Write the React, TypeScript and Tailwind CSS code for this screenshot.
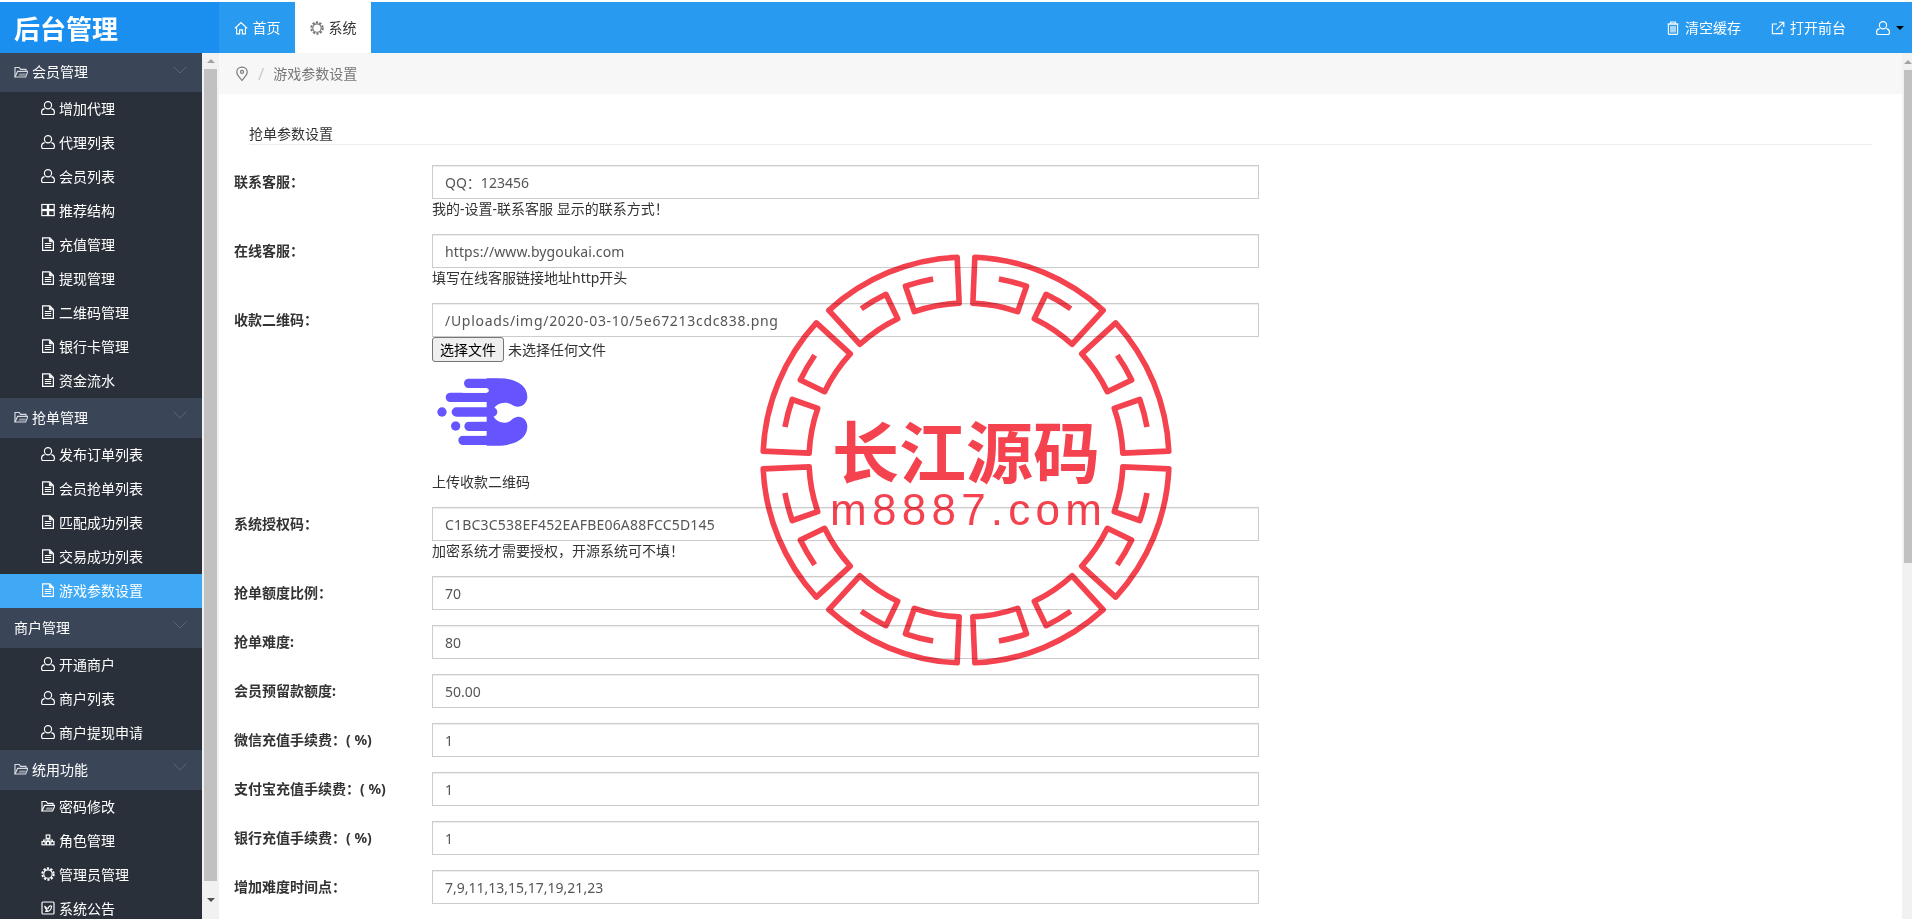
import React from "react";

const COLON = "\uFF1A";
const BANG = "\uFF01";
const COMMA = "\uFF0C";

const line = { fill: "none", stroke: "currentColor", strokeWidth: 1.15 } as const;

function Ico({ kind, className = "w-[14px] h-[14px]" }: { kind: string; className?: string }) {
  const c = (
    {
      user: (
        <>
          <circle cx="7" cy="4.2" r="3.6" {...line} />
          <path d="M3.6 7.6C1.8 7.9 0.6 9.2 0.6 11V12C0.6 13 1.2 13.6 2.2 13.6H11.8C12.8 13.6 13.4 13 13.4 12V11C13.4 9.2 12.2 7.9 10.4 7.6" {...line} />
        </>
      ),
      folder: (
        <>
          <path d="M1 12V2.5H5.2L6.6 4.4H12V6.2" {...line} />
          <path d="M1 12L3.6 6.4H14L11.6 12Z" {...line} />
          <path d="M4.5 10.8L5.6 8.6H12L11 10.8Z" fill="currentColor" opacity="0.55" />
        </>
      ),
      file: (
        <>
          <path d="M1.6 0.8H8.8L12.4 4.4V13.4H1.6Z" {...line} />
          <path d="M8.4 1V4.8H12.2" fill="currentColor" stroke="currentColor" strokeWidth="0.8" />
          <path d="M3.8 6.5H10.2M3.8 8.5H10.2M3.8 10.5H10.2" {...line} />
        </>
      ),
      grid: (
        <>
          <rect x="0.8" y="1.5" width="5.6" height="5" {...line} />
          <rect x="7.6" y="1.5" width="5.6" height="5" {...line} />
          <rect x="0.8" y="7.6" width="5.6" height="5" {...line} />
          <rect x="7.6" y="7.6" width="5.6" height="5" {...line} />
        </>
      ),
      sitemap: (
        <>
          <rect x="5.2" y="2" width="3.6" height="3.4" {...line} />
          <rect x="1" y="8.6" width="3.2" height="3.2" {...line} />
          <rect x="5.4" y="8.6" width="3.2" height="3.2" {...line} />
          <rect x="9.8" y="8.6" width="3.2" height="3.2" {...line} />
          <path d="M7 5.4V8.6M2.6 8.6V7H11.4V8.6" {...line} />
        </>
      ),
      gear: (
        <>
          <circle cx="7" cy="7" r="4.2" {...line} />
          <circle cx="7" cy="7" r="5.7" fill="none" stroke="currentColor" strokeWidth="2" strokeDasharray="2.2 1.38" />
        </>
      ),
      note: (
        <>
          <rect x="1" y="1" width="12" height="12" rx="1" {...line} />
          <path d="M3.6 5C5 7 6.4 7.4 7.4 7.2C7.4 5.4 9 4.4 10.6 5.2L10.2 7C10 9.2 7.6 11 4.2 10.2C5.4 10 6 9.6 6.4 9.2C5 8.6 4 7 3.6 5Z" {...line} />
        </>
      ),
      home: (
        <>
          <path d="M0.8 7.4L7 1.6L13.2 7.4" {...line} strokeWidth="1.3" />
          <path d="M2.6 6.6V12.8H5.6V8.8H8.4V12.8H11.4V6.6" {...line} />
        </>
      ),
      trash: (
        <>
          <path d="M1.4 3H12.6M4.6 3V1H9.4V3" {...line} />
          <rect x="2.4" y="3" width="9.2" height="10.4" rx="1" {...line} />
          <path d="M5 5V11.5M7 5V11.5M9 5V11.5" {...line} />
        </>
      ),
      ext: (
        <>
          <path d="M11 8V12.6H1.4V3H6" {...line} />
          <path d="M5.4 8.6L12.4 1.6M8 1.2H12.8V6" {...line} />
        </>
      ),
      pin: (
        <>
          <path d="M7 14L3 8.8C2.2 7.8 1.8 6.7 1.8 5.5C1.8 2.6 4.1 0.6 7 0.6C9.9 0.6 12.2 2.6 12.2 5.5C12.2 6.7 11.8 7.8 11 8.8Z" {...line} />
          <circle cx="7" cy="5.4" r="1.5" {...line} />
        </>
      ),
    } as Record<string, React.ReactNode>
  )[kind];
  return (
    <svg viewBox="0 0 14 14" className={`${className} shrink-0`}>
      {c}
    </svg>
  );
}

type Group = { title: string; folder: boolean; h: string; items: [string, string, boolean?][] };

const groups: Group[] = [
  {
    title: "会员管理",
    folder: true,
    h: "h-[39px]",
    items: [
      ["user", "增加代理"],
      ["user", "代理列表"],
      ["user", "会员列表"],
      ["grid", "推荐结构"],
      ["file", "充值管理"],
      ["file", "提现管理"],
      ["file", "二维码管理"],
      ["file", "银行卡管理"],
      ["file", "资金流水"],
    ],
  },
  {
    title: "抢单管理",
    folder: true,
    h: "h-[40px]",
    items: [
      ["user", "发布订单列表"],
      ["file", "会员抢单列表"],
      ["file", "匹配成功列表"],
      ["file", "交易成功列表"],
      ["file", "游戏参数设置", true],
    ],
  },
  {
    title: "商户管理",
    folder: false,
    h: "h-[40px]",
    items: [
      ["user", "开通商户"],
      ["user", "商户列表"],
      ["user", "商户提现申请"],
    ],
  },
  {
    title: "统用功能",
    folder: true,
    h: "h-[40px]",
    items: [
      ["folder", "密码修改"],
      ["sitemap", "角色管理"],
      ["gear", "管理员管理"],
      ["note", "系统公告"],
    ],
  },
];

function Field({ label, value, help, track = "" }: { label: string; value: string; help?: string; track?: string }) {
  return (
    <div className="flex mb-[15px]">
      <label className="w-[198px] shrink-0 h-[34px] leading-[34px] font-bold text-[#333]">{label}</label>
      <div className="w-[827px]">
        <input
          readOnly
          defaultValue={value}
          className={`block w-full h-[34px] px-[12px] border border-[#ccc] text-[14px] text-[#555] bg-white shadow-[inset_0_1px_1px_rgba(0,0,0,0.075)] outline-none ${track}`}
        />
        {help && <p className="h-[20px] leading-[20px] text-[#333]">{help}</p>}
      </div>
    </div>
  );
}

function Logo() {
  return (
    <svg viewBox="636 -24 300 330" className="block w-[100px] h-[110px]">
      <g fill="#6654ff">
        <path d="M800 25H840C890 25 922 48 922 80C922 98 908 110 893 110C878 110 872 98 855 98C834 98 818 112 818 128C818 144 834 158 855 158C872 158 878 140 895 140C910 140 922 152 922 170C922 205 885 227 830 227H800Z" />
        <circle cx="666" cy="126" r="14" />
        <circle cx="707" cy="168" r="14" />
      </g>
      <path
        d="M746 40H830M691 82H830M709 126H818M747 169H830M729 211H830"
        fill="none"
        stroke="#6654ff"
        strokeWidth="28"
        strokeLinecap="round"
      />
      <path d="M730 61.5H800M680 104.5H790M700 147.5H772M720 190H790" fill="none" stroke="#fff" strokeWidth="13" strokeLinecap="round" />
    </svg>
  );
}

function Stamp() {
  const cx = 210;
  const cy = 210;
  const pt = (a: number, r: number) => {
    const t = (a * Math.PI) / 180;
    return `${(cx + r * Math.sin(t)).toFixed(2)} ${(cy - r * Math.cos(t)).toFixed(2)}`;
  };
  const arc = (a: number, r: number, sweep: number) => `A${r} ${r} 0 0 ${sweep} ${pt(a, r)}`;
  const segs = Array.from({ length: 8 }, (_, k) => {
    const b = 45 * k;
    return [
      `M${pt(b + 10.3, 184)}`,
      arc(b + 19.2, 184, 1),
      `L${pt(b + 19.2, 157)}`,
      arc(b + 2.5, 157, 0),
      `L${pt(b + 2.5, 203)}`,
      arc(b + 42.5, 203, 1),
      `L${pt(b + 42.5, 157)}`,
      arc(b + 25.8, 157, 0),
      `L${pt(b + 25.8, 184)}`,
      arc(b + 34.7, 184, 1),
    ].join(" ");
  });
  return (
    <svg viewBox="0 0 420 420" className="absolute left-[756px] top-[250px] w-[420px] h-[420px] pointer-events-none mix-blend-multiply">
      {segs.map((d, i) => (
        <path key={i} d={d} fill="none" stroke="#f4424f" strokeWidth="5.6" strokeLinejoin="round" />
      ))}
      <text
        x="76"
        y="228"
        fontSize="67"
        fontWeight="700"
        fill="#f4424f"
        textLength="268"
        lengthAdjust="spacing"
        fontFamily="'Noto Sans CJK SC', sans-serif"
      >
        长江源码
      </text>
      <text
        x="74"
        y="275"
        fontSize="44"
        fill="#f4424f"
        textLength="272"
        lengthAdjust="spacing"
        fontFamily="'Liberation Sans', sans-serif"
      >
        m8887.com
      </text>
    </svg>
  );
}

export default function App() {
  return (
    <div className="relative h-[919px] w-[1912px] overflow-hidden bg-white pt-[2px] text-[14px] font-['Noto_Sans','Noto_Sans_CJK_SC',sans-serif]">
      <header className="flex h-[51px] bg-[#289af0] text-white">
        <div className="w-[219px] bg-[#1a8ff0] pl-[14px] text-[26px] font-bold leading-[54px]">后台管理</div>
        <a className="flex w-[76px] items-center justify-center gap-[5px]">
          <Ico kind="home" />
          首页
        </a>
        <a className="flex w-[76px] items-center justify-center gap-[5px] bg-white text-[#333]">
          <Ico kind="gear" className="w-[14px] h-[14px] text-[#777]" />
          系统
        </a>
        <div className="ml-auto flex items-center pr-[8px]">
          <span className="flex items-center gap-[5px]">
            <Ico kind="trash" />
            清空缓存
          </span>
          <span className="ml-[30px] flex items-center gap-[5px]">
            <Ico kind="ext" />
            打开前台
          </span>
          <span className="ml-[30px] flex items-center gap-[6px]">
            <Ico kind="user" />
            <span className="border-x-[4px] border-t-[4px] border-x-transparent border-t-black" />
          </span>
        </div>
      </header>
      <div className="flex h-[866px]">
        <aside className="flex w-[219px] shrink-0">
          <nav className="w-[202px] overflow-hidden bg-[#2a303a] text-white">
            {groups.map((g) => (
              <div key={g.title}>
                <div className={`flex items-center bg-[#3a4557] pb-[2px] pl-[14px] pr-[15px] ${g.h}`}>
                  {g.folder && <Ico kind="folder" className="mr-[4px] w-[14px] h-[14px] text-[#d8dce2]" />}
                  {g.title}
                  <svg viewBox="0 0 14 8" className="ml-auto mb-[4px] w-[14px] h-[8px] text-[#5a6577]">
                    <path d="M0.5 0.5L7 7L13.5 0.5" fill="none" stroke="currentColor" />
                  </svg>
                </div>
                {g.items.map(([k, t, act]) => (
                  <div key={t} className={`flex h-[34px] items-center gap-[4px] pb-[2px] pl-[41px] ${act ? "bg-[#3fa9f5]" : ""}`}>
                    <Ico kind={k} />
                    {t}
                  </div>
                ))}
              </div>
            ))}
          </nav>
          <div className="flex w-[17px] flex-col items-center bg-[#f1f1f1]">
            <div className="flex h-[16px] w-full items-center justify-center">
              <span className="border-x-[4px] border-b-[4px] border-x-transparent border-b-[#a3a3a3]" />
            </div>
            <div className="h-[812px] w-[13px] bg-[#c1c1c1]" />
            <div className="flex w-full flex-1 items-center justify-center">
              <span className="border-x-[4px] border-t-[4px] border-x-transparent border-t-[#505050]" />
            </div>
          </div>
        </aside>
        <main className="flex min-w-0 flex-1">
          <div className="min-w-0 flex-1">
            <div className="flex h-[41px] items-center bg-[#f7f7f7] pl-[16px] text-[#777]">
              <Ico kind="pin" className="h-[15px] w-[14px] text-[#777]" />
              <span className="ml-[9px] text-[17px] text-[#ccc]">/</span>
              <span className="ml-[9px]">游戏参数设置</span>
            </div>
            <h2 className="mx-[30px] mt-[30px] h-[21px] border-b border-[#eee] text-[14px] font-normal leading-[20px] text-[#333]">
              抢单参数设置
            </h2>
            <div className="mt-[20px] pl-[15px]">
              <Field label={`联系客服${COLON}`} value={`QQ${COLON}123456`} help={`我的-设置-联系客服 显示的联系方式${BANG}`} />
              <Field label={`在线客服${COLON}`} value="https://www.bygoukai.com" track="tracking-[0.12px]" help="填写在线客服链接地址http开头" />
              <div className="mb-[15px] flex">
                <label className="h-[34px] w-[198px] shrink-0 font-bold leading-[34px] text-[#333]">{`收款二维码${COLON}`}</label>
                <div className="w-[827px]">
                  <input
                    readOnly
                    defaultValue="/Uploads/img/2020-03-10/5e67213cdc838.png"
                    className="block h-[34px] w-full border border-[#ccc] px-[12px] text-[14px] tracking-[0.7px] text-[#555] shadow-[inset_0_1px_1px_rgba(0,0,0,0.075)] outline-none"
                  />
                  <div className="flex h-[25px] items-center text-[#333]">
                    <button className="h-[25px] w-[72px] rounded-[3px] border border-[#767676] bg-[#efefef] text-[14px] leading-[20px] text-black">
                      选择文件
                    </button>
                    <span className="ml-[4px]">未选择任何文件</span>
                  </div>
                  <Logo />
                  <p className="h-[20px] leading-[20px] text-[#333]">上传收款二维码</p>
                </div>
              </div>
              <Field label={`系统授权码${COLON}`} value="C1BC3C538EF452EAFBE06A88FCC5D145" track="tracking-[0.2px]" help={`加密系统才需要授权${COMMA}开源系统可不填${BANG}`} />
              <Field label={`抢单额度比例${COLON}`} value="70" />
              <Field label="抢单难度:" value="80" />
              <Field label="会员预留款额度:" value="50.00" />
              <Field label={`微信充值手续费${COLON}( %)`} value="1" />
              <Field label={`支付宝充值手续费${COLON}( %)`} value="1" />
              <Field label={`银行充值手续费${COLON}( %)`} value="1" />
              <Field label={`增加难度时间点${COLON}`} value="7,9,11,13,15,17,19,21,23" />
            </div>
          </div>
          <div className="w-[10px] shrink-0 bg-[#f1f1f1] pl-[2px]">
            <div className="flex h-[17px] items-center justify-center">
              <span className="border-x-[4px] border-b-[4px] border-x-transparent border-b-[#a3a3a3]" />
            </div>
            <div className="h-[493px] bg-[#c1c1c1]" />
          </div>
        </main>
      </div>
      <Stamp />
    </div>
  );
}
